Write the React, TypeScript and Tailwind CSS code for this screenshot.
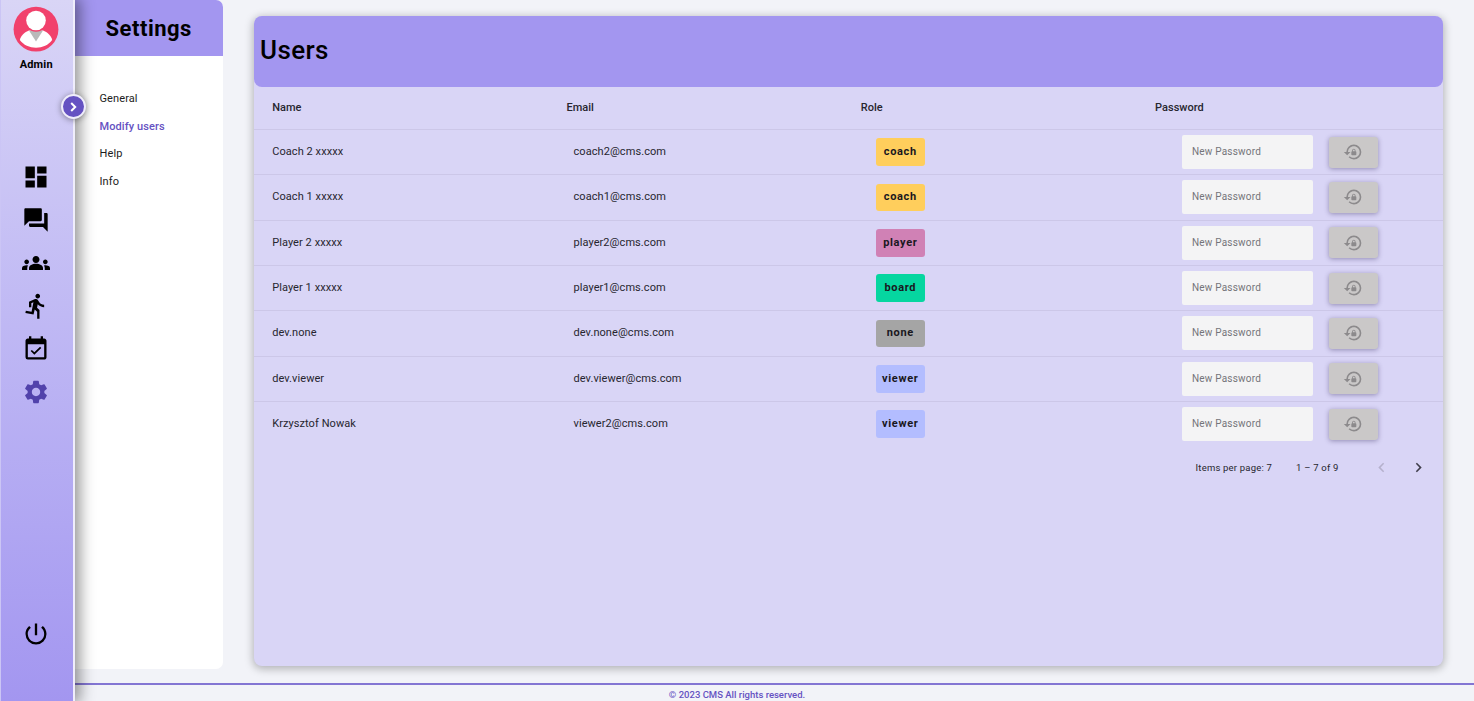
import React from "react";
import {
  MdChevronLeft,
  MdChevronRight,
  MdDashboard,
  MdDirectionsRun,
  MdEventAvailable,
  MdForum,
  MdGroups,
  MdLockReset,
  MdPowerSettingsNew,
  MdSettings,
} from "react-icons/md";

type Role = "coach" | "player" | "board" | "none" | "viewer";

const roleColors: Record<Role, string> = {
  coach: "bg-[#ffce5c]",
  player: "bg-[#d081b5]",
  board: "bg-[#06d6a0]",
  none: "bg-[#a5a5a5]",
  viewer: "bg-[#b3bdff]",
};

const users: { name: string; email: string; role: Role }[] = [
  { name: "Coach 2 xxxxx", email: "coach2@cms.com", role: "coach" },
  { name: "Coach 1 xxxxx", email: "coach1@cms.com", role: "coach" },
  { name: "Player 2 xxxxx", email: "player2@cms.com", role: "player" },
  { name: "Player 1 xxxxx", email: "player1@cms.com", role: "board" },
  { name: "dev.none", email: "dev.none@cms.com", role: "none" },
  { name: "dev.viewer", email: "dev.viewer@cms.com", role: "viewer" },
  { name: "Krzysztof Nowak", email: "viewer2@cms.com", role: "viewer" },
];

const navIcons = [MdDashboard, MdForum, MdGroups, MdDirectionsRun, MdEventAvailable];

function Avatar() {
  return (
    <svg viewBox="0 0 46 46" className="size-[46px]">
      <circle cx="23" cy="23.2" r="22.4" fill="#f1416c" />
      <path
        d="M6.8 34C8 29.5 11.5 26.3 16 24.6H30C34.5 26.3 38 29.5 39.2 34C35.5 39 29.5 41.7 23 41.7S10.500 39 6.800 34Z"
        fill="#fff"
      />
      <path d="M16 24.600H30L23 35.500Z" fill="#b9b9b9" />
      <circle cx="23" cy="14.800" r="11" fill="#f1416c" />
      <circle cx="23" cy="14.500" r="9.800" fill="#fff" />
    </svg>
  );
}

function Sidebar() {
  return (
    <aside className="relative z-10 flex w-[75px] shrink-0 flex-col items-center border-r-2 border-l border-r-[#efedfb] border-l-[#cbc5f5] bg-linear-to-b from-[#d9d5f6] to-[#a396f0] pt-1.5 pr-[1.5px] shadow-[3px_0_14px_2px_rgba(0,0,0,0.42)]">
      <Avatar />
      <p className="mt-[5px] text-[11px] leading-[15px] font-bold tracking-[0.2px] text-black">Admin</p>
      <nav className="mt-[91.3px] flex flex-col items-center gap-[15px] text-black">
        {navIcons.map((Icon, i) => (
          <Icon key={i} className="size-7" />
        ))}
        <MdSettings className="size-7 text-[#5142ab]" />
      </nav>
      <MdPowerSettingsNew className="mt-auto mb-[53px] size-7 text-black" />
      <button className="absolute top-[94px] left-[59.5px] flex size-[25px] items-center justify-center rounded-full border-2 border-[#efedfb] bg-[#6552c2] text-white shadow-[0_1px_6px_rgba(0,0,0,0.4)]">
        <svg viewBox="0 0 18 18" className="size-[18px] shrink-0" fill="none" stroke="currentColor" strokeWidth="2">
          <path d="M7.200 5L11.200 9L7.200 13" />
        </svg>
      </button>
    </aside>
  );
}

function SettingsPanel() {
  return (
    <section className="h-[669px] w-[147.5px] shrink-0 overflow-hidden rounded-r-[7px] bg-white">
      <h1 className="flex h-14 items-center justify-center bg-[#a396f0] text-[22px] font-bold tracking-[0.5px] text-black">
        Settings
      </h1>
      <ul className="flex flex-col pt-[29px] pl-[24.5px] text-[11px] leading-[27.7px] tracking-[0.1px] text-[#1c1c1c]">
        <li>General</li>
        <li className="font-medium text-[#6552c2]">Modify users</li>
        <li>Help</li>
        <li>Info</li>
      </ul>
    </section>
  );
}

function UsersCard() {
  return (
    <main className="mt-4 ml-[31.5px] flex h-[650px] w-[1189px] flex-col rounded-lg bg-[#d9d5f6] text-[#27262f] shadow-[0_2px_8px_1px_rgba(0,0,0,0.27)]">
      <h2 className="flex h-[71px] shrink-0 items-center rounded-lg bg-[#a396f0] pl-1.5 text-[26px] font-medium tracking-[0.4px] text-black">
        <span className="-mt-0.5">Users</span>
      </h2>
      <div className="grid h-[43px] shrink-0 grid-cols-[294.3px_294.3px_294.3px_1fr] items-center border-b border-[#ccc7e8] pl-[18.2px] text-[11px] font-medium">
        <span>Name</span>
        <span>Email</span>
        <span>Role</span>
        <span>Password</span>
      </div>
      {users.map((u) => (
        <div
          key={u.email}
          className="grid h-[45.33px] shrink-0 grid-cols-[294.3px_294.3px_294.3px_1fr] items-center border-b border-[#ccc7e8] pl-[18.2px] text-[11px] tracking-[0.07px] last-of-type:border-transparent"
        >
          <span>{u.name}</span>
          <span className="pl-[7px]">{u.email}</span>
          <span
            className={`ml-[15px] flex h-[27.5px] w-[49px] items-center justify-center rounded-[3px] font-bold tracking-[0.65px] text-[#191720] ${roleColors[u.role]}`}
          >
            {u.role}
          </span>
          <span className="flex items-center gap-4 pl-[26.8px]">
            <input
              placeholder="New Password"
              className="h-[34px] w-[131px] rounded-[2px] bg-[#f4f4f5] px-[10px] pb-px text-[10px] tracking-[0.22px] placeholder:text-[#74747a]"
            />
            <button className="flex h-[31px] w-[49px] items-center justify-center rounded-[3px] bg-[#cac8c8] text-[#8c8a8c] shadow-[0_1px_5px_rgba(40,30,80,0.4)]">
              <MdLockReset className="size-5" />
            </button>
          </span>
        </div>
      ))}
      <footer className="flex h-[41px] shrink-0 items-center justify-end pr-[15px] text-[9.5px] tracking-[0.2px]">
        <span>Items per page: 7</span>
        <span className="ml-[24px]">1 – 7 of 9</span>
        <MdChevronLeft className="ml-[33.5px] size-[19px] text-[#b5b1cc]" />
        <MdChevronRight className="ml-[18px] size-[19px] text-[#3f3d4a]" />
      </footer>
    </main>
  );
}

export default function App() {
  return (
    <div className="grid h-[701px] w-[1474px] grid-cols-[75px_1fr] grid-rows-[683px_18px] overflow-hidden bg-[#f2f3f8] font-['Roboto',sans-serif]">
      <div className="z-10 row-span-2 flex">
        <Sidebar />
      </div>
      <div className="flex">
        <SettingsPanel />
        <UsersCard />
      </div>
      <p className="border-t-2 border-[#8375d3] pr-[75px] text-center text-[9.5px] leading-[19px] font-medium text-[#6552c2]">
        © 2023 CMS All rights reserved.
      </p>
    </div>
  );
}
